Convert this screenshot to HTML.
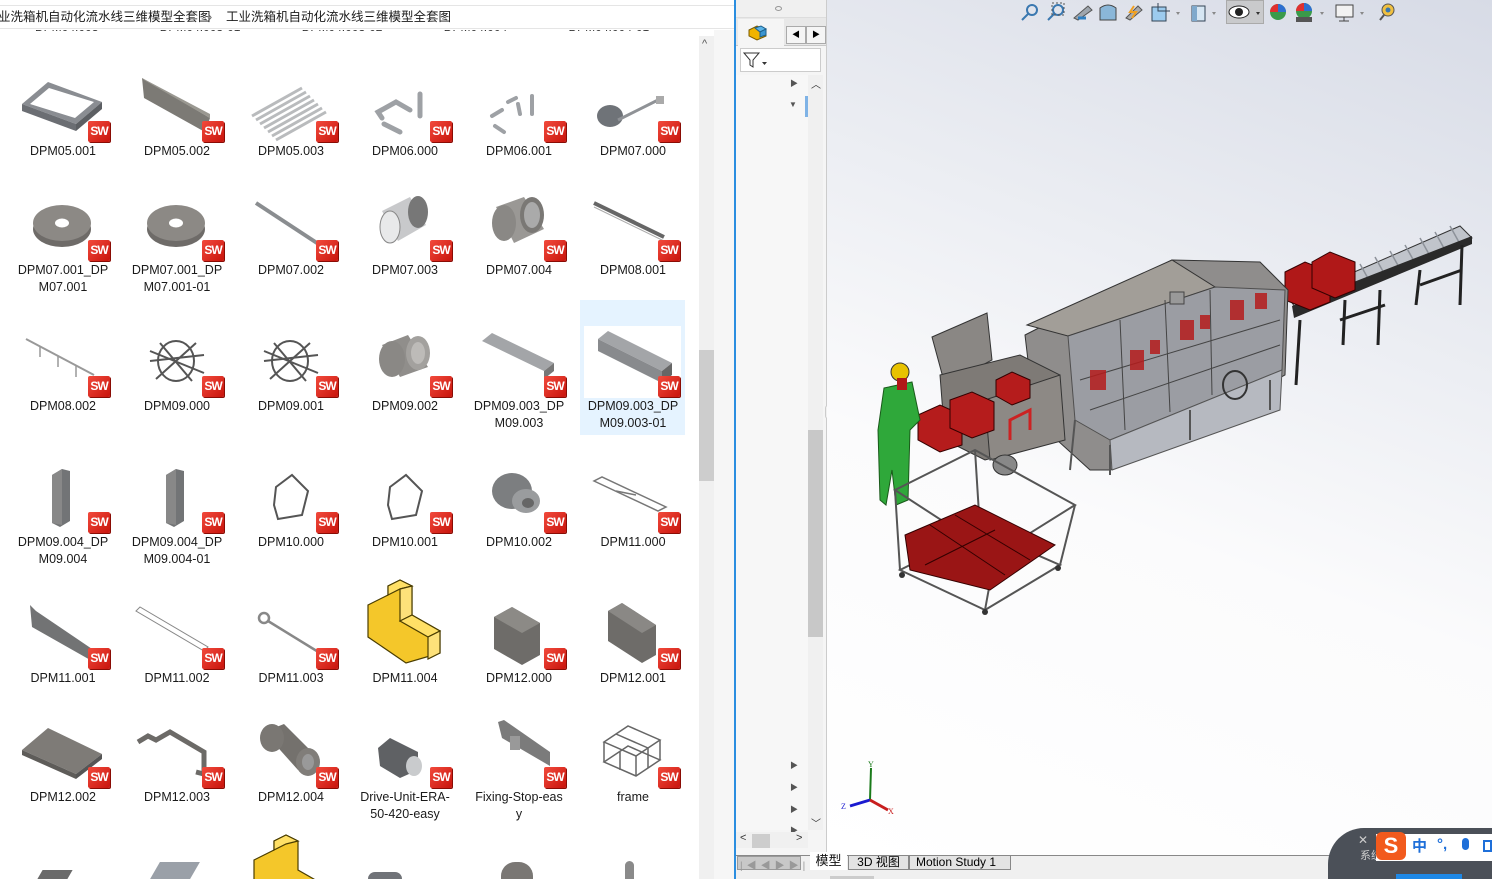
<!DOCTYPE html>
<html><head><meta charset="utf-8"><style>
*{margin:0;padding:0;box-sizing:border-box}
html,body{width:1492px;height:879px;overflow:hidden}
body{background:#fff;font-family:"Liberation Sans","Noto Sans CJK SC",sans-serif;position:relative}
.abs{position:absolute}
#left{left:0;top:0;width:734px;height:879px;background:#fff;overflow:hidden}
.it{position:absolute;width:114px;height:140px}
.it svg{position:absolute;left:0;top:0;overflow:visible}
.sw{position:absolute;left:82px;top:55px;width:22px;height:21px;background:linear-gradient(135deg,#f24a3c,#c8140c);border-radius:2px;color:#fff;font:bold 12px/21px "Liberation Sans",sans-serif;text-align:center;letter-spacing:-1px;box-shadow:1px 1px 0 #8a0c05}
.lb{position:absolute;left:0;top:77px;width:114px;text-align:center;font-size:12.5px;line-height:17px;color:#1a1a1a}
.sel{background:#e5f3ff}
</style></head><body>

<div id="left" class="abs">
  <div class="abs" style="left:0;top:0;width:734px;height:6px;background:#fff;border-bottom:1px solid #e5e5e5"></div>
  <div class="abs" style="left:0;top:7px;width:734px;height:22px;border-bottom:1px solid #e5e5e5;font-size:12.5px;line-height:20px;color:#1a1a1a;white-space:nowrap">
    <span style="position:absolute;left:-2px">业洗箱机自动化流水线三维模型全套图</span>
    <span style="position:absolute;left:208px;color:#666">›</span>
    <span style="position:absolute;left:226px">工业洗箱机自动化流水线三维模型全套图</span>
  </div>
  <div class="abs" style="left:0;top:30px;width:700px;height:8px;overflow:hidden">
    <div class="abs" style="left:35px;top:-10px;font-size:12px;color:#333;white-space:nowrap;word-spacing:58px">DPM04.003 DPM04.003-01 DPM04.003-02 DPM04.004 DPM04.004-01</div>
  </div>
  <div class="abs" style="left:699px;top:36px;width:15px;height:843px;background:#f0f0f0"></div>
  <div class="abs" style="left:702px;top:38px;font-size:11px;color:#555">^</div>
  <div class="abs" style="left:699px;top:350px;width:15px;height:131px;background:#cdcdcd"></div>
  <div class="abs" style="left:714px;top:30px;width:20px;height:849px;background:#f6f6f6"></div>

  <div class="abs sel" style="left:580px;top:300px;width:105px;height:135px"></div>
  <div class="abs" style="left:584px;top:326px;width:97px;height:72px;background:#fff"></div>

  <div class="it" style="left:6px;top:66px"><svg width="114" height="78"><polygon points="16,38 42,16 96,36 70,58" fill="#8a8d92"/><polygon points="24,38 43,22 88,36 69,52" fill="#fff"/><polygon points="16,38 16,45 70,65 70,58" fill="#6b6e73"/><polygon points="70,58 96,36 96,43 70,65" fill="#5c5f63"/></svg><div class="sw">SW</div><div class="lb">DPM05.001</div></div>
  <div class="it" style="left:120px;top:66px"><svg width="114" height="78"><polygon points="22,12 24,32 85,66 90,52" fill="#7c7a75"/><polygon points="22,12 90,48 90,52 24,14" fill="#9a9891"/></svg><div class="sw">SW</div><div class="lb">DPM05.002</div></div>
  <div class="it" style="left:234px;top:66px"><svg width="114" height="78"><g stroke="#b9bbbd" stroke-width="3"><line x1="18" y1="50" x2="68" y2="22"/><line x1="22" y1="54" x2="72" y2="26"/><line x1="26" y1="58" x2="76" y2="30"/><line x1="30" y1="62" x2="80" y2="34"/><line x1="34" y1="66" x2="84" y2="38"/><line x1="38" y1="70" x2="88" y2="42"/><line x1="42" y1="74" x2="92" y2="46"/></g></svg><div class="sw">SW</div><div class="lb">DPM05.003</div></div>
  <div class="it" style="left:348px;top:66px"><svg width="114" height="78"><g fill="none" stroke="#9ea1a5" stroke-width="5" stroke-linecap="round"><path d="M34,52 L30,46 L48,36 L62,44"/><line x1="72" y1="28" x2="72" y2="50"/><path d="M36,58 L52,66"/></g></svg><div class="sw">SW</div><div class="lb">DPM06.000</div></div>
  <div class="it" style="left:462px;top:66px"><svg width="114" height="78"><g fill="none" stroke="#9ea1a5" stroke-width="4" stroke-linecap="round"><line x1="30" y1="50" x2="40" y2="44"/><line x1="46" y1="36" x2="54" y2="32"/><line x1="56" y1="38" x2="58" y2="48"/><line x1="70" y1="30" x2="70" y2="48"/><line x1="33" y1="60" x2="42" y2="66"/></g></svg><div class="sw">SW</div><div class="lb">DPM06.001</div></div>
  <div class="it" style="left:576px;top:66px"><svg width="114" height="78"><ellipse cx="34" cy="50" rx="13" ry="11" fill="#6f7378"/><line x1="42" y1="54" x2="82" y2="34" stroke="#8f9296" stroke-width="3"/><rect x="80" y="30" width="8" height="8" fill="#aaa"/></svg><div class="sw">SW</div><div class="lb">DPM07.000</div></div>

  <div class="it" style="left:6px;top:185px"><svg width="114" height="78"><ellipse cx="56" cy="44" rx="29" ry="18" fill="#6e6b68"/><ellipse cx="56" cy="38" rx="29" ry="18" fill="#8c8985"/><ellipse cx="56" cy="38" rx="7" ry="4.5" fill="#fff"/></svg><div class="sw">SW</div><div class="lb">DPM07.001_DP<br>M07.001</div></div>
  <div class="it" style="left:120px;top:185px"><svg width="114" height="78"><ellipse cx="56" cy="44" rx="29" ry="18" fill="#6e6b68"/><ellipse cx="56" cy="38" rx="29" ry="18" fill="#8c8985"/><ellipse cx="56" cy="38" rx="7" ry="4.5" fill="#fff"/></svg><div class="sw">SW</div><div class="lb">DPM07.001_DP<br>M07.001-01</div></div>
  <div class="it" style="left:234px;top:185px"><svg width="114" height="78"><line x1="22" y1="18" x2="86" y2="60" stroke="#8a8d90" stroke-width="4"/></svg><div class="sw">SW</div><div class="lb">DPM07.002</div></div>
  <div class="it" style="left:348px;top:185px"><svg width="114" height="78"><polygon points="34,26 62,12 78,40 50,56" fill="#c8c9cb"/><ellipse cx="42" cy="42" rx="10" ry="16" fill="#e8e9ea" stroke="#888"/><ellipse cx="70" cy="27" rx="10" ry="16" fill="#777"/></svg><div class="sw">SW</div><div class="lb">DPM07.003</div></div>
  <div class="it" style="left:462px;top:185px"><svg width="114" height="78"><polygon points="34,22 62,12 82,44 52,58" fill="#9a9895"/><ellipse cx="42" cy="38" rx="12" ry="18" fill="#8a8885"/><ellipse cx="70" cy="30" rx="12" ry="18" fill="#7a7875"/><ellipse cx="70" cy="30" rx="8" ry="13" fill="#aaa"/></svg><div class="sw">SW</div><div class="lb">DPM07.004</div></div>
  <div class="it" style="left:576px;top:185px"><svg width="114" height="78"><line x1="18" y1="18" x2="88" y2="52" stroke="#666" stroke-width="4"/><line x1="18" y1="22" x2="88" y2="56" stroke="#aaa" stroke-width="1"/></svg><div class="sw">SW</div><div class="lb">DPM08.001</div></div>

  <div class="it" style="left:6px;top:321px"><svg width="114" height="78"><line x1="20" y1="18" x2="88" y2="54" stroke="#999" stroke-width="2"/><g stroke="#999" stroke-width="1.5"><line x1="34" y1="26" x2="34" y2="36"/><line x1="52" y1="35" x2="52" y2="46"/><line x1="70" y1="45" x2="70" y2="56"/></g></svg><div class="sw">SW</div><div class="lb">DPM08.002</div></div>
  <div class="it" style="left:120px;top:321px"><svg width="114" height="78"><g fill="none" stroke="#555" stroke-width="2"><ellipse cx="56" cy="40" rx="18" ry="20"/><line x1="30" y1="30" x2="84" y2="52"/><line x1="30" y1="40" x2="84" y2="34"/><line x1="36" y1="58" x2="76" y2="22"/><line x1="40" y1="22" x2="72" y2="60"/></g></svg><div class="sw">SW</div><div class="lb">DPM09.000</div></div>
  <div class="it" style="left:234px;top:321px"><svg width="114" height="78"><g fill="none" stroke="#555" stroke-width="2"><ellipse cx="56" cy="40" rx="18" ry="20"/><line x1="30" y1="30" x2="84" y2="52"/><line x1="30" y1="40" x2="84" y2="34"/><line x1="36" y1="58" x2="76" y2="22"/><line x1="40" y1="22" x2="72" y2="60"/></g></svg><div class="sw">SW</div><div class="lb">DPM09.001</div></div>
  <div class="it" style="left:348px;top:321px"><svg width="114" height="78"><polygon points="34,24 60,14 80,46 52,56" fill="#908e8b"/><ellipse cx="44" cy="38" rx="13" ry="18" fill="#8a8885"/><ellipse cx="70" cy="32" rx="12" ry="17" fill="#a3a19e"/><ellipse cx="70" cy="32" rx="7" ry="11" fill="#bdbbb8"/></svg><div class="sw">SW</div><div class="lb">DPM09.002</div></div>
  <div class="it" style="left:462px;top:321px"><svg width="114" height="78"><polygon points="20,20 30,12 92,42 82,50" fill="#a3a5a8"/><polygon points="82,50 92,42 92,50 82,58" fill="#777"/></svg><div class="sw">SW</div><div class="lb">DPM09.003_DP<br>M09.003</div></div>
  <div class="it" style="left:576px;top:321px"><svg width="114" height="78"><polygon points="22,18 32,10 96,42 86,50" fill="#a3a5a8"/><polygon points="22,18 22,30 86,62 86,50" fill="#888a8d"/><polygon points="86,50 96,42 96,54 86,62" fill="#666"/></svg><div class="sw">SW</div><div class="lb">DPM09.003_DP<br>M09.003-01</div></div>

  <div class="it" style="left:6px;top:457px"><svg width="114" height="78"><polygon points="46,18 56,12 64,14 64,64 54,70 46,66" fill="#727476"/><polygon points="46,18 56,12 56,68 46,66" fill="#888"/></svg><div class="sw">SW</div><div class="lb">DPM09.004_DP<br>M09.004</div></div>
  <div class="it" style="left:120px;top:457px"><svg width="114" height="78"><polygon points="46,18 56,12 64,14 64,64 54,70 46,66" fill="#727476"/><polygon points="46,18 56,12 56,68 46,66" fill="#888"/></svg><div class="sw">SW</div><div class="lb">DPM09.004_DP<br>M09.004-01</div></div>
  <div class="it" style="left:234px;top:457px"><svg width="114" height="78"><path d="M42,30 L58,18 L74,34 L68,58 L44,62 L40,48 Z" fill="none" stroke="#555" stroke-width="2"/></svg><div class="sw">SW</div><div class="lb">DPM10.000</div></div>
  <div class="it" style="left:348px;top:457px"><svg width="114" height="78"><path d="M42,30 L58,18 L74,34 L68,58 L44,62 L40,48 Z" fill="none" stroke="#555" stroke-width="2"/></svg><div class="sw">SW</div><div class="lb">DPM10.001</div></div>
  <div class="it" style="left:462px;top:457px"><svg width="114" height="78"><ellipse cx="50" cy="34" rx="20" ry="18" fill="#7c7e80"/><ellipse cx="64" cy="44" rx="14" ry="12" fill="#9a9c9e"/><ellipse cx="66" cy="46" rx="6" ry="5" fill="#666"/></svg><div class="sw">SW</div><div class="lb">DPM10.002</div></div>
  <div class="it" style="left:576px;top:457px"><svg width="114" height="78"><g stroke="#777" stroke-width="1.5" fill="none"><path d="M18,24 L82,54 L90,50 L26,20 Z"/><line x1="40" y1="34" x2="60" y2="38"/></g></svg><div class="sw">SW</div><div class="lb">DPM11.000</div></div>

  <div class="it" style="left:6px;top:593px"><svg width="114" height="78"><polygon points="24,12 30,18 92,60 86,68 26,34" fill="#727374"/></svg><div class="sw">SW</div><div class="lb">DPM11.001</div></div>
  <div class="it" style="left:120px;top:593px"><svg width="114" height="78"><polygon points="16,18 20,14 88,54 84,58" fill="none" stroke="#888" stroke-width="1"/></svg><div class="sw">SW</div><div class="lb">DPM11.002</div></div>
  <div class="it" style="left:234px;top:593px"><svg width="114" height="78"><circle cx="30" cy="25" r="5" fill="none" stroke="#888" stroke-width="2.5"/><line x1="34" y1="28" x2="86" y2="60" stroke="#888" stroke-width="2.5"/></svg><div class="sw">SW</div><div class="lb">DPM11.003</div></div>
  <div class="it" style="left:348px;top:593px"><svg width="114" height="78"><g stroke="#4a3d00" stroke-width="1.2"><polygon points="20,12 40,2 40,-7 52,-13 64,-7 64,22 92,38 92,60 58,70 20,44" fill="#f4c72a"/><polygon points="40,2 52,-4 64,-7 52,-13 40,-7" fill="#ffe066"/><polygon points="52,-4 64,-7 64,22 52,28" fill="#fde17a"/><polygon points="52,28 64,22 92,38 80,44" fill="#ffe066"/><polygon points="80,44 92,38 92,60 80,66" fill="#fde17a"/></g></svg><div class="lb">DPM11.004</div></div>
  <div class="it" style="left:462px;top:593px"><svg width="114" height="78"><polygon points="32,24 50,14 78,30 78,62 60,72 32,56" fill="#6e6c69"/><polygon points="32,24 50,14 78,30 60,40" fill="#8c8a86"/></svg><div class="sw">SW</div><div class="lb">DPM12.000</div></div>
  <div class="it" style="left:576px;top:593px"><svg width="114" height="78"><polygon points="32,18 46,10 80,32 80,62 66,70 32,48" fill="#6e6c69"/><polygon points="32,18 46,10 80,32 66,40" fill="#8a8885"/></svg><div class="sw">SW</div><div class="lb">DPM12.001</div></div>

  <div class="it" style="left:6px;top:712px"><svg width="114" height="78"><polygon points="16,38 42,16 96,42 70,62" fill="#7e7b77"/><polygon points="16,38 16,43 70,67 70,62" fill="#5e5c59"/><polygon points="70,62 96,42 96,47 70,67" fill="#555"/></svg><div class="sw">SW</div><div class="lb">DPM12.002</div></div>
  <div class="it" style="left:120px;top:712px"><svg width="114" height="78"><path d="M18,30 L28,24 L36,28 L50,20 L84,40 L84,62 L76,60" fill="none" stroke="#6c6a67" stroke-width="5"/></svg><div class="sw">SW</div><div class="lb">DPM12.003</div></div>
  <div class="it" style="left:234px;top:712px"><svg width="114" height="78"><polygon points="30,20 50,12 84,46 64,58" fill="#74716d"/><ellipse cx="38" cy="26" rx="12" ry="14" fill="#7a7773"/><ellipse cx="74" cy="50" rx="12" ry="14" fill="#807d79"/><ellipse cx="74" cy="50" rx="6" ry="8" fill="#999"/></svg><div class="sw">SW</div><div class="lb">DPM12.004</div></div>
  <div class="it" style="left:348px;top:712px"><svg width="114" height="78"><polygon points="30,36 42,26 70,40 70,58 52,66 32,54" fill="#5f6164"/><ellipse cx="66" cy="54" rx="8" ry="10" fill="#c9cbcd"/></svg><div class="sw">SW</div><div class="lb">Drive-Unit-ERA-<br>50-420-easy</div></div>
  <div class="it" style="left:462px;top:712px"><svg width="114" height="78"><polygon points="36,10 42,8 88,40 88,54 40,26" fill="#7b7b7b"/><rect x="48" y="24" width="10" height="14" fill="#999"/></svg><div class="sw">SW</div><div class="lb">Fixing-Stop-eas<br>y</div></div>
  <div class="it" style="left:576px;top:712px"><svg width="114" height="78"><g fill="none" stroke="#666" stroke-width="1.5"><polygon points="28,30 52,14 84,28 60,44"/><polygon points="28,50 52,34 84,48 60,64"/><line x1="28" y1="30" x2="28" y2="50"/><line x1="60" y1="44" x2="60" y2="64"/><line x1="84" y1="28" x2="84" y2="48"/><line x1="44" y1="40" x2="44" y2="58"/><line x1="72" y1="36" x2="72" y2="56"/><line x1="40" y1="22" x2="72" y2="36"/></g></svg><div class="sw">SW</div><div class="lb">frame</div></div>

  <svg class="abs" style="left:234px;top:833px;overflow:hidden" width="114" height="46"><g transform="translate(0,15)" stroke="#4a3d00" stroke-width="1.2"><polygon points="20,12 40,2 40,-7 52,-13 64,-7 64,22 92,38 92,60 58,70 20,44" fill="#f4c72a"/><polygon points="40,2 52,-4 64,-7 52,-13 40,-7" fill="#ffe066"/></g></svg>
  <div class="abs" style="left:40px;top:870px;width:30px;height:9px;background:#6a6a6a;transform:skewX(-30deg)"></div>
  <div class="abs" style="left:155px;top:862px;width:40px;height:17px;background:#9aa0a8;transform:skewX(-30deg)"></div>
  <div class="abs" style="left:368px;top:872px;width:34px;height:7px;border-radius:8px 8px 0 0;background:#707378"></div>
  <div class="abs" style="left:501px;top:862px;width:32px;height:17px;border-radius:14px 14px 0 0;background:#7a7774"></div>
  <div class="abs" style="left:625px;top:861px;width:9px;height:18px;border-radius:5px 5px 0 0;background:#8a8a8a"></div>
</div>

<div class="abs" style="left:734px;top:0;width:2px;height:879px;background:#2b8ee0"></div>
<div class="abs" style="left:736px;top:0;width:91px;height:879px;background:#f5f5f5"></div>
<div class="abs" style="left:736px;top:0;width:90px;height:18px;background:#f0f0f0;border-bottom:1px solid #ddd"></div>
<div class="abs" style="left:775px;top:6px;width:7px;height:5px;border-radius:50%;border:1px solid #999"></div>
<div class="abs" style="left:736px;top:18px;width:90px;height:28px;background:#e8e8e8;border-bottom:1px solid #c8c8c8"></div>
<div class="abs" style="left:738px;top:19px;width:46px;height:28px;background:#f5f5f5"></div>
<svg class="abs" style="left:747px;top:22px" width="22" height="20"><polygon points="2,8 10,4 19,8 19,14 10,18 2,14" fill="#f0b400" stroke="#7a5a00"/><polygon points="8,6 14,4 19,7 13,10" fill="#5bb4e8" stroke="#1d5f8a"/><polygon points="13,10 19,7 19,13 13,15" fill="#3a95d0" stroke="#1d5f8a"/></svg>
<div class="abs" style="left:786px;top:26px;width:20px;height:18px;border:1px solid #aaa;background:#f5f5f5;font-size:8px;text-align:center;line-height:16px">◀</div>
<div class="abs" style="left:806px;top:26px;width:20px;height:18px;border:1px solid #aaa;background:#f5f5f5;font-size:8px;text-align:center;line-height:16px">▶</div>
<div class="abs" style="left:740px;top:48px;width:81px;height:24px;background:#fff;border:1px solid #ccc"></div>
<svg class="abs" style="left:743px;top:52px" width="26" height="16"><path d="M1,1 H16 L10,8 V15 L7,13 V8 Z" fill="#fff" stroke="#333"/><path d="M19,10 H24 L21.5,13 Z" fill="#333"/></svg>
<div class="abs" style="left:736px;top:75px;width:72px;height:755px;background:#f7f7f7"></div>
<div class="abs" style="left:808px;top:75px;width:15px;height:755px;background:#f0f0f0"></div>
<div class="abs" style="left:808px;top:430px;width:15px;height:207px;background:#c8c8c8"></div>
<div class="abs" style="left:805px;top:96px;width:3px;height:21px;background:#7fb3e6"></div>
<div class="abs" style="left:811px;top:76px;font-size:10px;color:#333">︿</div>
<div class="abs" style="left:811px;top:815px;font-size:10px;color:#333">﹀</div>
<div class="abs" style="left:790px;top:78px;font-size:8px;color:#555">▶</div>
<div class="abs" style="left:789px;top:100px;font-size:8px;color:#555">▼</div>
<div class="abs" style="left:790px;top:760px;font-size:8px;color:#555">▶</div>
<div class="abs" style="left:790px;top:782px;font-size:8px;color:#555">▶</div>
<div class="abs" style="left:790px;top:804px;font-size:8px;color:#555">▶</div>
<div class="abs" style="left:790px;top:825px;font-size:8px;color:#555">▶</div>
<div class="abs" style="left:736px;top:832px;width:72px;height:16px;background:#f0f0f0"></div>
<div class="abs" style="left:752px;top:834px;width:18px;height:14px;background:#cdcdcd"></div>
<div class="abs" style="left:740px;top:832px;font-size:11px;color:#333">&lt;</div>
<div class="abs" style="left:796px;top:832px;font-size:11px;color:#333">&gt;</div>
<div class="abs" style="left:826px;top:0;width:1px;height:855px;background:#ccc"></div>
<div class="abs" style="left:825px;top:405px;width:8px;height:14px;background:#f0f0f0;border:1px solid #ccc;border-radius:3px"></div>

<div class="abs" style="left:827px;top:0;width:665px;height:855px;background:linear-gradient(200deg,#d7dbe6 0%,#eceef3 35%,#fbfbfc 60%,#fff 100%)"></div>

<div class="abs" style="left:1226px;top:0;width:38px;height:24px;background:#c9cacc;border:1px solid #aaa"></div>
<svg class="abs" style="left:1018px;top:2px" width="390" height="22">
 <g fill="none" stroke="#3a78b0" stroke-width="2">
  <circle cx="14" cy="8" r="5"/><line x1="10" y1="12" x2="4" y2="18"/>
  <circle cx="40" cy="8" r="5"/><line x1="36" y1="12" x2="30" y2="18"/>
 </g>
 <rect x="34" y="1" width="12" height="12" fill="none" stroke="#555" stroke-dasharray="2,2"/>
 <path d="M56,16 L70,4 L74,8 L60,18 Z" fill="#9ea5ad" stroke="#555"/><path d="M60,16 L68,16" stroke="#2f7fc1" stroke-width="3"/>
 <path d="M82,6 Q90,0 98,6 V18 H82 Z" fill="#8ab7d9" stroke="#444"/>
 <path d="M108,16 L120,4 L124,8 L112,18 Z" fill="#aaa" stroke="#555"/><path d="M116,4 L112,10 L118,10 L114,16" stroke="#f0a020" stroke-width="2" fill="none"/>
 <rect x="134" y="5" width="14" height="14" fill="#9ccbee" stroke="#345"/><path d="M140,1 V9 H152" fill="none" stroke="#345"/>
 <path d="M158,10 L162,10 L160,13Z" fill="#888"/>
 <rect x="174" y="4" width="13" height="15" fill="#d6e6f3" stroke="#345"/><rect x="174" y="4" width="5" height="15" fill="#7fa9cc"/>
 <path d="M194,10 L198,10 L196,13Z" fill="#888"/>
 <ellipse cx="221" cy="10" rx="10" ry="6" fill="#fff" stroke="#222"/><circle cx="221" cy="10" r="4" fill="#222"/>
 <path d="M238,10 L242,10 L240,13Z" fill="#333"/>
 <circle cx="260" cy="10" r="8" fill="#3a9a4a"/><path d="M260,10 L252,10 A8,8 0 0 1 260,2Z" fill="#e03030"/><path d="M260,10 L260,2 A8,8 0 0 1 268,10Z" fill="#2f6fd0"/>
 <circle cx="286" cy="9" r="8" fill="#3a9a4a"/><path d="M286,9 L278,9 A8,8 0 0 1 286,1Z" fill="#e03030"/><path d="M286,9 L286,1 A8,8 0 0 1 294,9Z" fill="#2f6fd0"/><rect x="278" y="15" width="16" height="5" fill="#555"/>
 <path d="M302,10 L306,10 L304,13Z" fill="#888"/>
 <rect x="318" y="3" width="17" height="12" fill="#f2f2f2" stroke="#444"/><line x1="326" y1="15" x2="326" y2="19" stroke="#444"/><line x1="321" y1="19" x2="331" y2="19" stroke="#444"/>
 <path d="M342,10 L346,10 L344,13Z" fill="#888"/>
 <circle cx="370" cy="8" r="6" fill="#f0c040" stroke="#555"/><circle cx="370" cy="8" r="2.5" fill="#3a78b0"/><line x1="362" y1="18" x2="366" y2="13" stroke="#555" stroke-width="2"/>
</svg>

<svg class="abs" style="left:827px;top:0" width="665" height="855">
 <g transform="translate(-827,0)">
  <polygon points="1290,300 1460,226 1472,238 1300,314" fill="#c0c4cb" stroke="#333"/>
  <g stroke="#8d929a" stroke-width="1.5">
   <line x1="1345" y1="270" x2="1355" y2="288"/><line x1="1360" y1="264" x2="1370" y2="282"/><line x1="1375" y1="257" x2="1385" y2="275"/><line x1="1390" y1="251" x2="1400" y2="269"/><line x1="1405" y1="245" x2="1415" y2="263"/><line x1="1420" y1="238" x2="1430" y2="256"/><line x1="1435" y1="232" x2="1445" y2="250"/><line x1="1450" y1="226" x2="1460" y2="244"/>
  </g>
  <polygon points="1292,306 1472,236 1472,244 1294,318" fill="#2a2a2a"/>
  <g stroke="#222" stroke-width="3"><line x1="1300" y1="320" x2="1296" y2="385"/><line x1="1345" y1="300" x2="1343" y2="345"/><line x1="1380" y1="290" x2="1378" y2="345"/><line x1="1420" y1="270" x2="1416" y2="305"/><line x1="1462" y1="245" x2="1460" y2="305"/><line x1="1340" y1="320" x2="1385" y2="305"/><line x1="1420" y1="285" x2="1462" y2="270"/></g>
  <polygon points="1285,272 1305,262 1330,272 1330,302 1310,310 1285,300" fill="#b01818" stroke="#300"/>
  <polygon points="1312,262 1330,252 1355,262 1355,290 1335,298 1312,288" fill="#b01818" stroke="#300"/>
  <polygon points="1025,335 1172,260 1260,262 1288,290 1285,375 1110,470 1090,470 1035,420" fill="#8f8d8c" stroke="#333"/>
  <polygon points="1027,325 1172,260 1215,287 1068,336" fill="#a29e98" stroke="#333"/>
  <polygon points="1068,336 1215,287 1285,290 1282,370 1110,440 1075,420" fill="#9ea0a8" opacity=".85" stroke="#444"/>
  <polygon points="1110,440 1282,370 1280,410 1112,470" fill="#b6b9c0" stroke="#555"/>
  <g stroke="#444" stroke-width="1" fill="none"><line x1="1120" y1="320" x2="1125" y2="430"/><line x1="1165" y1="300" x2="1170" y2="412"/><line x1="1210" y1="290" x2="1212" y2="395"/><line x1="1080" y1="380" x2="1280" y2="320"/><line x1="1090" y1="410" x2="1280" y2="345"/></g>
  <rect x="1170" y="292" width="14" height="12" fill="#999" stroke="#444"/>
  <g fill="#b51c1c" opacity=".85"><rect x="1090" y="370" width="16" height="20"/><rect x="1130" y="350" width="14" height="20"/><rect x="1180" y="320" width="14" height="20"/><rect x="1230" y="300" width="14" height="20"/><rect x="1255" y="293" width="12" height="16"/><rect x="1150" y="340" width="10" height="14"/><rect x="1200" y="315" width="10" height="14"/></g>
  <ellipse cx="1235" cy="385" rx="12" ry="14" fill="none" stroke="#333" stroke-width="2"/>
  <g stroke="#555" stroke-width="2"><line x1="1075" y1="420" x2="1070" y2="470"/><line x1="1110" y1="445" x2="1110" y2="475"/><line x1="1190" y1="410" x2="1190" y2="440"/><line x1="1270" y1="380" x2="1270" y2="410"/></g>
  <polygon points="932,337 987,313 992,360 945,385" fill="#8a8784" stroke="#333"/>
  <polygon points="940,375 1020,355 1060,375 1060,440 985,460 945,440" fill="#7e7a76" stroke="#333"/>
  <polygon points="985,400 1060,375 1065,440 990,460" fill="#8d8985" stroke="#333"/>
  <path d="M1010,440 V420 L1030,410 V430" fill="none" stroke="#c22" stroke-width="3"/>
  <ellipse cx="1005" cy="465" rx="12" ry="10" fill="#888" stroke="#333"/>
  <g fill="#b51c1c" stroke="#300"><polygon points="918,415 940,405 962,415 962,445 940,452 918,440"/><polygon points="950,400 972,392 994,402 994,430 972,438 950,428"/><polygon points="996,380 1012,372 1030,380 1030,398 1012,405 996,396"/></g>
  <circle cx="900" cy="372" r="9" fill="#e8c200" stroke="#333"/>
  <polygon points="884,388 912,382 920,420 910,430 908,500 896,505 892,470 886,505 880,500 878,430" fill="#2fa83a" stroke="#1a5a1a"/>
  <rect x="897" y="378" width="10" height="12" fill="#b01818"/>
  <g fill="none" stroke="#555" stroke-width="2">
   <polygon points="895,490 975,450 1075,505 995,555"/>
   <polygon points="900,570 980,530 1060,565 985,610"/>
   <line x1="895" y1="490" x2="900" y2="570"/><line x1="995" y1="555" x2="985" y2="610"/><line x1="1075" y1="505" x2="1060" y2="565"/><line x1="975" y1="450" x2="980" y2="530"/>
  </g>
  <polygon points="905,535 975,505 1055,545 990,590 910,570" fill="#9a1515" stroke="#300"/>
  <g stroke="#300"><line x1="930" y1="525" x2="1005" y2="575"/><line x1="955" y1="515" x2="1030" y2="560"/><line x1="925" y1="565" x2="995" y2="530"/></g>
  <g fill="#333"><circle cx="902" cy="575" r="3"/><circle cx="985" cy="612" r="3"/><circle cx="1058" cy="568" r="3"/></g>
  <line x1="870" y1="800" x2="871" y2="768" stroke="#1a7a1a" stroke-width="2"/>
  <line x1="870" y1="800" x2="850" y2="806" stroke="#1a1ad0" stroke-width="3"/>
  <line x1="870" y1="800" x2="888" y2="810" stroke="#c81e1e" stroke-width="3"/>
  <text x="868" y="767" font-size="8" fill="#1a7a1a" font-family="Liberation Serif">Y</text>
  <text x="841" y="809" font-size="8" fill="#1a1ad0" font-family="Liberation Serif">Z</text>
  <text x="888" y="814" font-size="8" fill="#c81e1e" font-family="Liberation Serif">X</text>
 </g>
</svg>

<div class="abs" style="left:736px;top:855px;width:756px;height:24px;background:#f0f0f0;border-top:1px solid #888"></div>
<div class="abs" style="left:737px;top:856px;width:64px;height:14px;background:#c8c8c8;border:1px solid #999"></div>
<div class="abs" style="left:740px;top:857px;font-size:10px;color:#999;letter-spacing:4px">|◀◀▶▶|</div>
<div class="abs" style="left:810px;top:852px;width:37px;height:18px;background:#fff;font-size:13px;line-height:18px;text-align:center;color:#111">模型</div>
<div class="abs" style="left:848px;top:855px;width:61px;height:15px;background:#e3e3e3;border:1px solid #888;font-size:12px;line-height:13px;text-align:center">3D 视图</div>
<div class="abs" style="left:909px;top:855px;width:102px;height:15px;background:#e3e3e3;border:1px solid #888;font-size:12px;line-height:13px;padding-left:6px">Motion Study 1</div>
<div class="abs" style="left:830px;top:876px;width:44px;height:3px;background:#ccc"></div>

<div class="abs" style="left:1328px;top:828px;width:164px;height:51px;background:#4b5058;border-radius:36px 0 0 0"></div>
<div class="abs" style="left:1358px;top:833px;color:#ccc;font-size:12px;line-height:14px">✕</div>
<div class="abs" style="left:1360px;top:850px;color:#ccc;font-size:11px;line-height:13px">系统</div>
<div class="abs" style="left:1376px;top:834px;width:116px;height:27px;background:#fff"></div>
<div class="abs" style="left:1376px;top:832px;width:30px;height:28px;background:#f25a1d;border-radius:6px;color:#fff;font:bold 22px/28px 'Liberation Sans',sans-serif;text-align:center">S</div>
<div class="abs" style="left:1412px;top:838px;color:#1e6fd9;font-size:15px;line-height:18px;font-weight:bold">中</div>
<div class="abs" style="left:1437px;top:836px;color:#1e6fd9;font-size:15px;line-height:18px;font-weight:bold">°,</div>
<div class="abs" style="left:1462px;top:838px;width:7px;height:12px;background:#1e6fd9;border-radius:4px"></div>
<div class="abs" style="left:1483px;top:840px;width:9px;height:12px;border:2px solid #1e6fd9"></div>
<div class="abs" style="left:1396px;top:874px;width:66px;height:5px;background:#1e88e5"></div>
</body></html>
